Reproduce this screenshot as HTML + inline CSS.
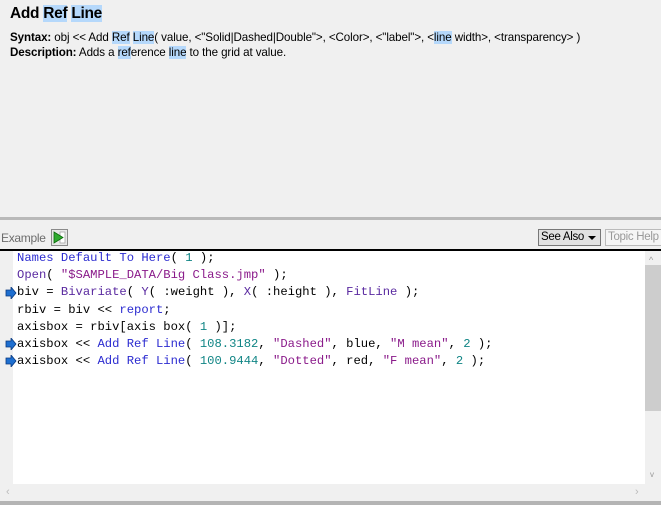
<!DOCTYPE html>
<html><head><style>
body{margin:0;width:661px;height:505px;background:#f0f0f0;font-family:"Liberation Sans",sans-serif;position:relative;overflow:hidden;color:#000}
.hl{background:#b5d8fb}
#t{position:absolute;left:10px;top:5px;font-size:15.5px;font-weight:bold;letter-spacing:-0.3px}
.l{position:absolute;left:10px;font-size:11.6px;white-space:nowrap;letter-spacing:-0.1px}
#sep{position:absolute;left:0;top:217px;width:661px;height:3px;background:#b9b9b9}
#ex{position:absolute;left:1px;top:231px;font-size:12px;color:#6d6d6d;letter-spacing:-0.3px}
#btn{position:absolute;left:51px;top:229px;width:17px;height:17px;border:1px solid #8a8a8a;background:#e8e8e8;box-sizing:border-box}
#see{position:absolute;left:538px;top:229px;width:63px;height:17px;border:1px solid #777;background:#e1e1e1;box-sizing:border-box;font-size:11.5px;padding-left:2px;line-height:15px;letter-spacing:-0.3px;white-space:nowrap}
#see i{position:absolute;right:4px;top:6px;width:0;height:0;border-left:4px solid transparent;border-right:4px solid transparent;border-top:4px solid #000}
#topic{position:absolute;left:605px;top:229px;width:70px;height:17px;border:1px solid #bbb;background:#f5f5f5;box-sizing:border-box;font-size:11.5px;color:#999;padding-left:2px;line-height:15px;letter-spacing:-0.3px;white-space:nowrap}
#line{position:absolute;left:0;top:249px;width:661px;height:2px;background:#000}
#code{position:absolute;left:13px;top:251px;width:632px;height:233px;background:#fff}
#vs{position:absolute;left:645px;top:251px;width:16px;height:234px;background:#f0f0f0}
#thumb{position:absolute;left:645px;top:265px;width:16px;height:146px;background:#cdcdcd}
#bot{position:absolute;left:0;top:501px;width:661px;height:4px;background:#b4b4b4}
pre{margin:0;position:absolute;left:17px;top:250px;font-family:"Liberation Mono",monospace;font-size:12.2px;line-height:17.2px;color:#000}
.k{color:#2b2bd0}.s{color:#8a1a8a}.n{color:#108585}.f{color:#5a2aa0}
.arr{position:absolute;left:5px;width:12px;height:12px}
</style></head><body>
<div id="t">Add <span class="hl">Ref</span> <span class="hl">Line</span></div>
<div class="l" style="top:31px"><b>Syntax:</b> obj &lt;&lt; Add <span class="hl">Ref</span> <span class="hl">Line</span>( value, &lt;"Solid|Dashed|Double"&gt;, &lt;Color&gt;, &lt;"label"&gt;, &lt;<span class="hl">line</span> width&gt;, &lt;transparency&gt; )</div>
<div class="l" style="top:46px"><b>Description:</b> Adds a <span class="hl">ref</span>erence <span class="hl">line</span> to the grid at value.</div>
<div id="sep"></div>
<div id="ex">Example</div>
<div id="btn"><svg width="15" height="15" viewBox="0 0 15 15" style="position:absolute;left:0;top:0"><rect x="8" y="2" width="5" height="11" fill="#fff" stroke="#999" stroke-width="0.7"/><path d="M2 2 L11 7.5 L2 13Z" fill="#2faa2f" stroke="#0a6a0a" stroke-width="0.8"/></svg></div>
<div id="see">See Also<i></i></div>
<div id="topic">Topic Help</div>
<div id="line"></div>
<div id="code"></div>
<div id="vs"></div>
<div id="thumb"></div>
<div style="position:absolute;left:649px;top:255px;font-size:9px;color:#999">^</div>
<div style="position:absolute;left:650px;top:470px;font-size:8px;color:#999">v</div>
<div style="position:absolute;left:6px;top:486px;font-size:11px;color:#bbb">‹</div>
<div style="position:absolute;left:635px;top:486px;font-size:11px;color:#bbb">›</div>
<div id="bot"></div>
<pre><span class="k">Names Default To Here</span>( <span class="n">1</span> );
<span class="f">Open</span>( <span class="s">"$SAMPLE_DATA/Big Class.jmp"</span> );
biv = <span class="f">Bivariate</span>( <span class="f">Y</span>( :weight ), <span class="f">X</span>( :height ), <span class="f">FitLine</span> );
rbiv = biv &lt;&lt; <span class="k">report</span>;
axisbox = rbiv[axis box( <span class="n">1</span> )];
axisbox &lt;&lt; <span class="k">Add Ref Line</span>( <span class="n">108.3182</span>, <span class="s">"Dashed"</span>, blue, <span class="s">"M mean"</span>, <span class="n">2</span> );
axisbox &lt;&lt; <span class="k">Add Ref Line</span>( <span class="n">100.9444</span>, <span class="s">"Dotted"</span>, red, <span class="s">"F mean"</span>, <span class="n">2</span> );</pre>
<svg class="arr" style="top:287px" viewBox="0 0 12 12"><path d="M1 3 H6 V0 L11 6 L6 12 V9 H1Z" fill="#1e6fd0" stroke="#0a3a80" stroke-width="0.8"/></svg>
<svg class="arr" style="top:338px" viewBox="0 0 12 12"><path d="M1 3 H6 V0 L11 6 L6 12 V9 H1Z" fill="#1e6fd0" stroke="#0a3a80" stroke-width="0.8"/></svg>
<svg class="arr" style="top:355px" viewBox="0 0 12 12"><path d="M1 3 H6 V0 L11 6 L6 12 V9 H1Z" fill="#1e6fd0" stroke="#0a3a80" stroke-width="0.8"/></svg>
</body></html>
